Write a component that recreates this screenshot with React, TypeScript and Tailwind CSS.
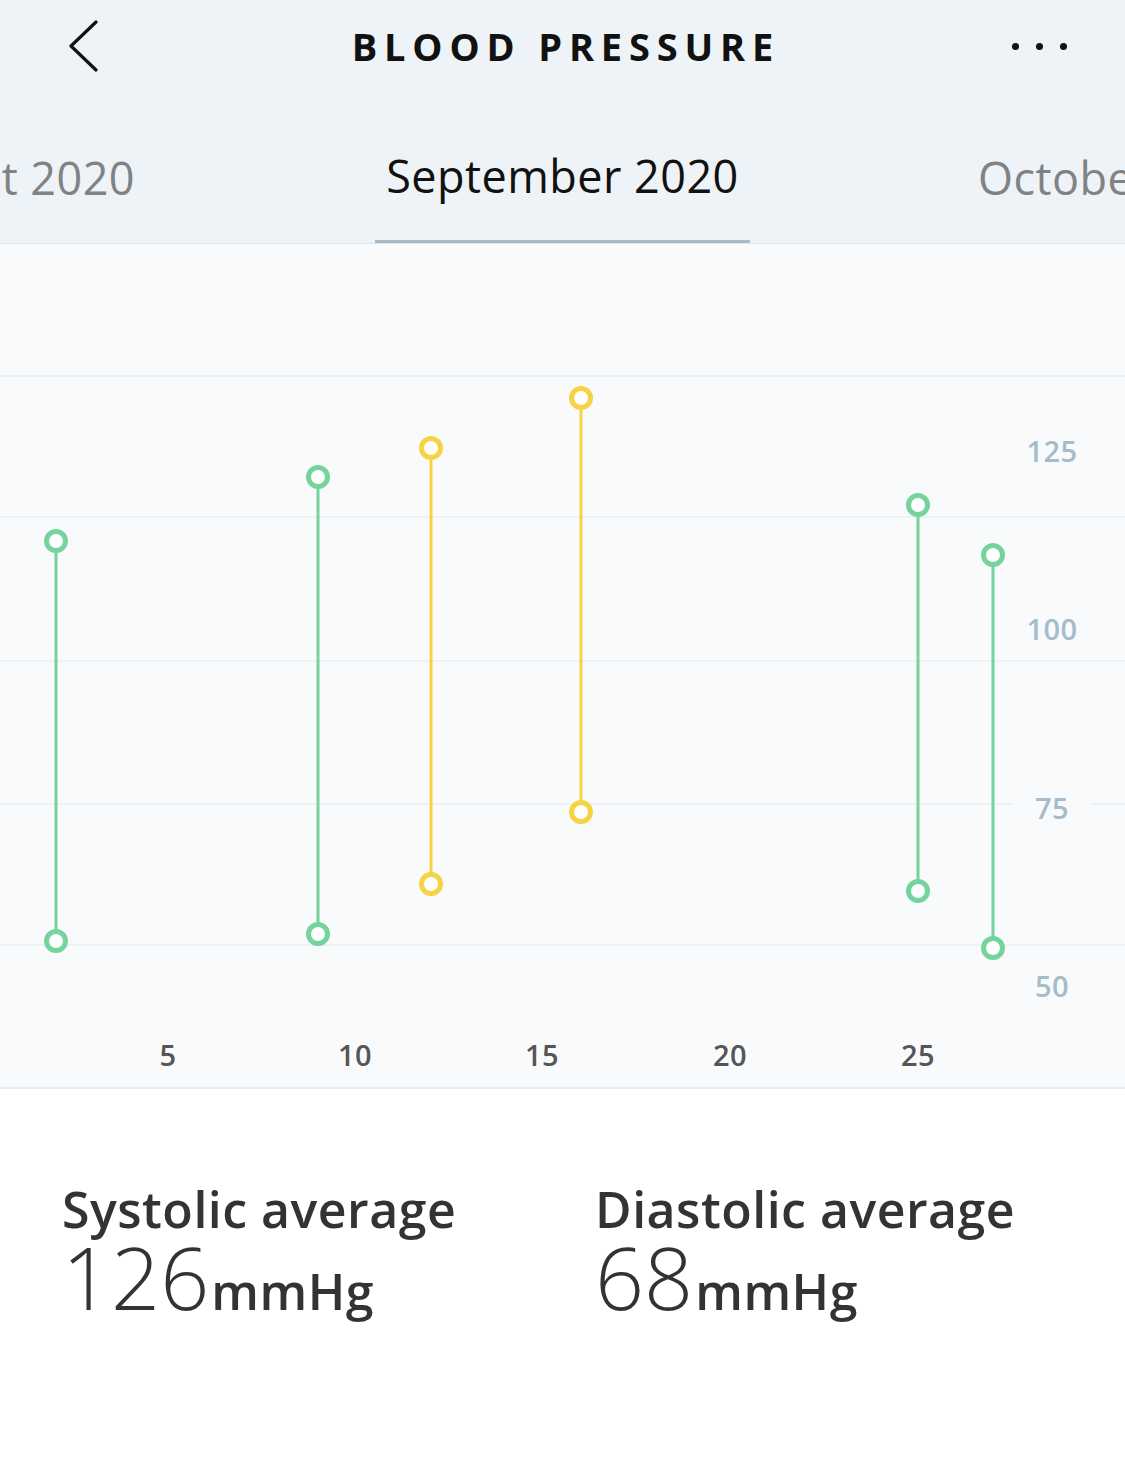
import React from "react";

const GREEN = "#74d49b";
const YELLOW = "#f5d343";
const FONT = "'Open Sans', Lato, sans-serif";

const bars = [
  { x: 56, t: 541, b: 941, c: GREEN },
  { x: 318, t: 477, b: 934, c: GREEN },
  { x: 431, t: 448, b: 884, c: YELLOW },
  { x: 581, t: 398, b: 812, c: YELLOW },
  { x: 918, t: 505, b: 891, c: GREEN },
  { x: 993, t: 555, b: 948, c: GREEN },
];
const grid = [376, 517, 661, 804, 945];
const yLabels = [
  { v: "125", y: 450 },
  { v: "100", y: 628 },
  { v: "75", y: 807 },
  { v: "50", y: 985 },
];
const xLabels = [
  { v: "5", x: 168 },
  { v: "10", x: 355 },
  { v: "15", x: 542 },
  { v: "20", x: 730 },
  { v: "25", x: 918 },
];
const OFF = 244;

function Chart() {
  return (
    <svg width="1125" height="843" viewBox="0 0 1125 843" className="block">
      {grid.map((g) => (
        <line key={g} x1="0" x2="1125" y1={g - OFF} y2={g - OFF} stroke="#eef1f6" strokeWidth="2" />
      ))}
      {yLabels.map((l) => (
        <g key={l.v}>
          <rect x="1014" y={l.y - OFF - 16} width="76" height="32" fill="#f8fafc" />
          <text
            x="1052"
            y={l.y - OFF}
            textAnchor="middle"
            dominantBaseline="central"
            fontFamily={FONT}
            fontSize="29"
            fontWeight="600"
            fill="#a5bccb"
            letterSpacing="0.5"
          >
            {l.v}
          </text>
        </g>
      ))}
      {xLabels.map((l) => (
        <text
          key={l.v}
          x={l.x}
          y={1054 - OFF}
          textAnchor="middle"
          dominantBaseline="central"
          fontFamily={FONT}
          fontSize="29"
          fontWeight="600"
          fill="#555555"
          letterSpacing="0.5"
        >
          {l.v}
        </text>
      ))}
      {bars.map((b, i) => (
        <g key={i}>
          <line x1={b.x} x2={b.x} y1={b.t - OFF} y2={b.b - OFF} stroke={b.c} strokeWidth="3" />
          <circle cx={b.x} cy={b.t - OFF} r="9.5" fill="#ffffff" stroke={b.c} strokeWidth="5" />
          <circle cx={b.x} cy={b.b - OFF} r="9.5" fill="#ffffff" stroke={b.c} strokeWidth="5" />
        </g>
      ))}
    </svg>
  );
}

function Stat({ label, value }: { label: string; value: string }) {
  return (
    <div className="flex flex-col text-[#333333]">
      <div className="text-[50px] leading-[56px] font-semibold tracking-[0.01em] whitespace-nowrap">{label}</div>
      <div className="flex items-baseline">
        <span className="text-[86px] leading-[80px] font-light">{value}</span>
        <span className="text-[50px] leading-none font-semibold tracking-[0.01em] ml-[2px]">mmHg</span>
      </div>
    </div>
  );
}

export default function App() {
  return (
    <div
      className="w-[1125px] h-[1468px] overflow-hidden bg-white"
      style={{ fontFamily: FONT }}
    >
      <div className="bg-[#eef3f7] border-b border-[#dfe6ec] h-[244px] flex flex-col">
        <div className="relative h-[92px] flex items-center justify-between px-[68px]">
          <svg width="34" height="52" viewBox="0 0 34 52" className="-ml-[2px]">
            <path d="M30 2 L5 26 L30 50" fill="none" stroke="#111111" strokeWidth="3.2" strokeLinecap="round" strokeLinejoin="round" />
          </svg>
          <div className="absolute left-0 right-0 top-0 h-[92px] flex items-center justify-center pointer-events-none">
            <span className="text-[38px] font-bold tracking-[0.18em] text-[#111111] pl-[0.18em]">
              BLOOD PRESSURE
            </span>
          </div>
          <div className="flex gap-[17px] mr-[-10px]">
            <span className="w-[7px] h-[7px] rounded-full bg-[#111111]" />
            <span className="w-[7px] h-[7px] rounded-full bg-[#111111]" />
            <span className="w-[7px] h-[7px] rounded-full bg-[#111111]" />
          </div>
        </div>
        <div className="flex-1 grid grid-cols-[375px_375px_375px] overflow-hidden">
          <div className="flex justify-end items-center pr-[240px] pt-[20px]">
            <span className="text-[45px] tracking-[0.01em] whitespace-nowrap text-[#808285]">August 2020</span>
          </div>
          <div className="flex justify-center items-center border-b-[3px] border-[#a5b9c8] pt-[20px]">
            <span className="text-[45px] tracking-[0.01em] whitespace-nowrap text-[#111111]">September 2020</span>
          </div>
          <div className="flex justify-start items-center pl-[228px] pt-[20px]">
            <span className="text-[45px] tracking-[0.01em] whitespace-nowrap text-[#808285]">October 2020</span>
          </div>
        </div>
      </div>
      <div className="bg-[#f8fafc] border-b-2 border-[#e8edf2]">
        <Chart />
      </div>
      <div className="grid grid-cols-[533px_1fr] pl-[62px] pt-[92px]">
        <Stat label="Systolic average" value="126" />
        <Stat label="Diastolic average" value="68" />
      </div>
    </div>
  );
}
